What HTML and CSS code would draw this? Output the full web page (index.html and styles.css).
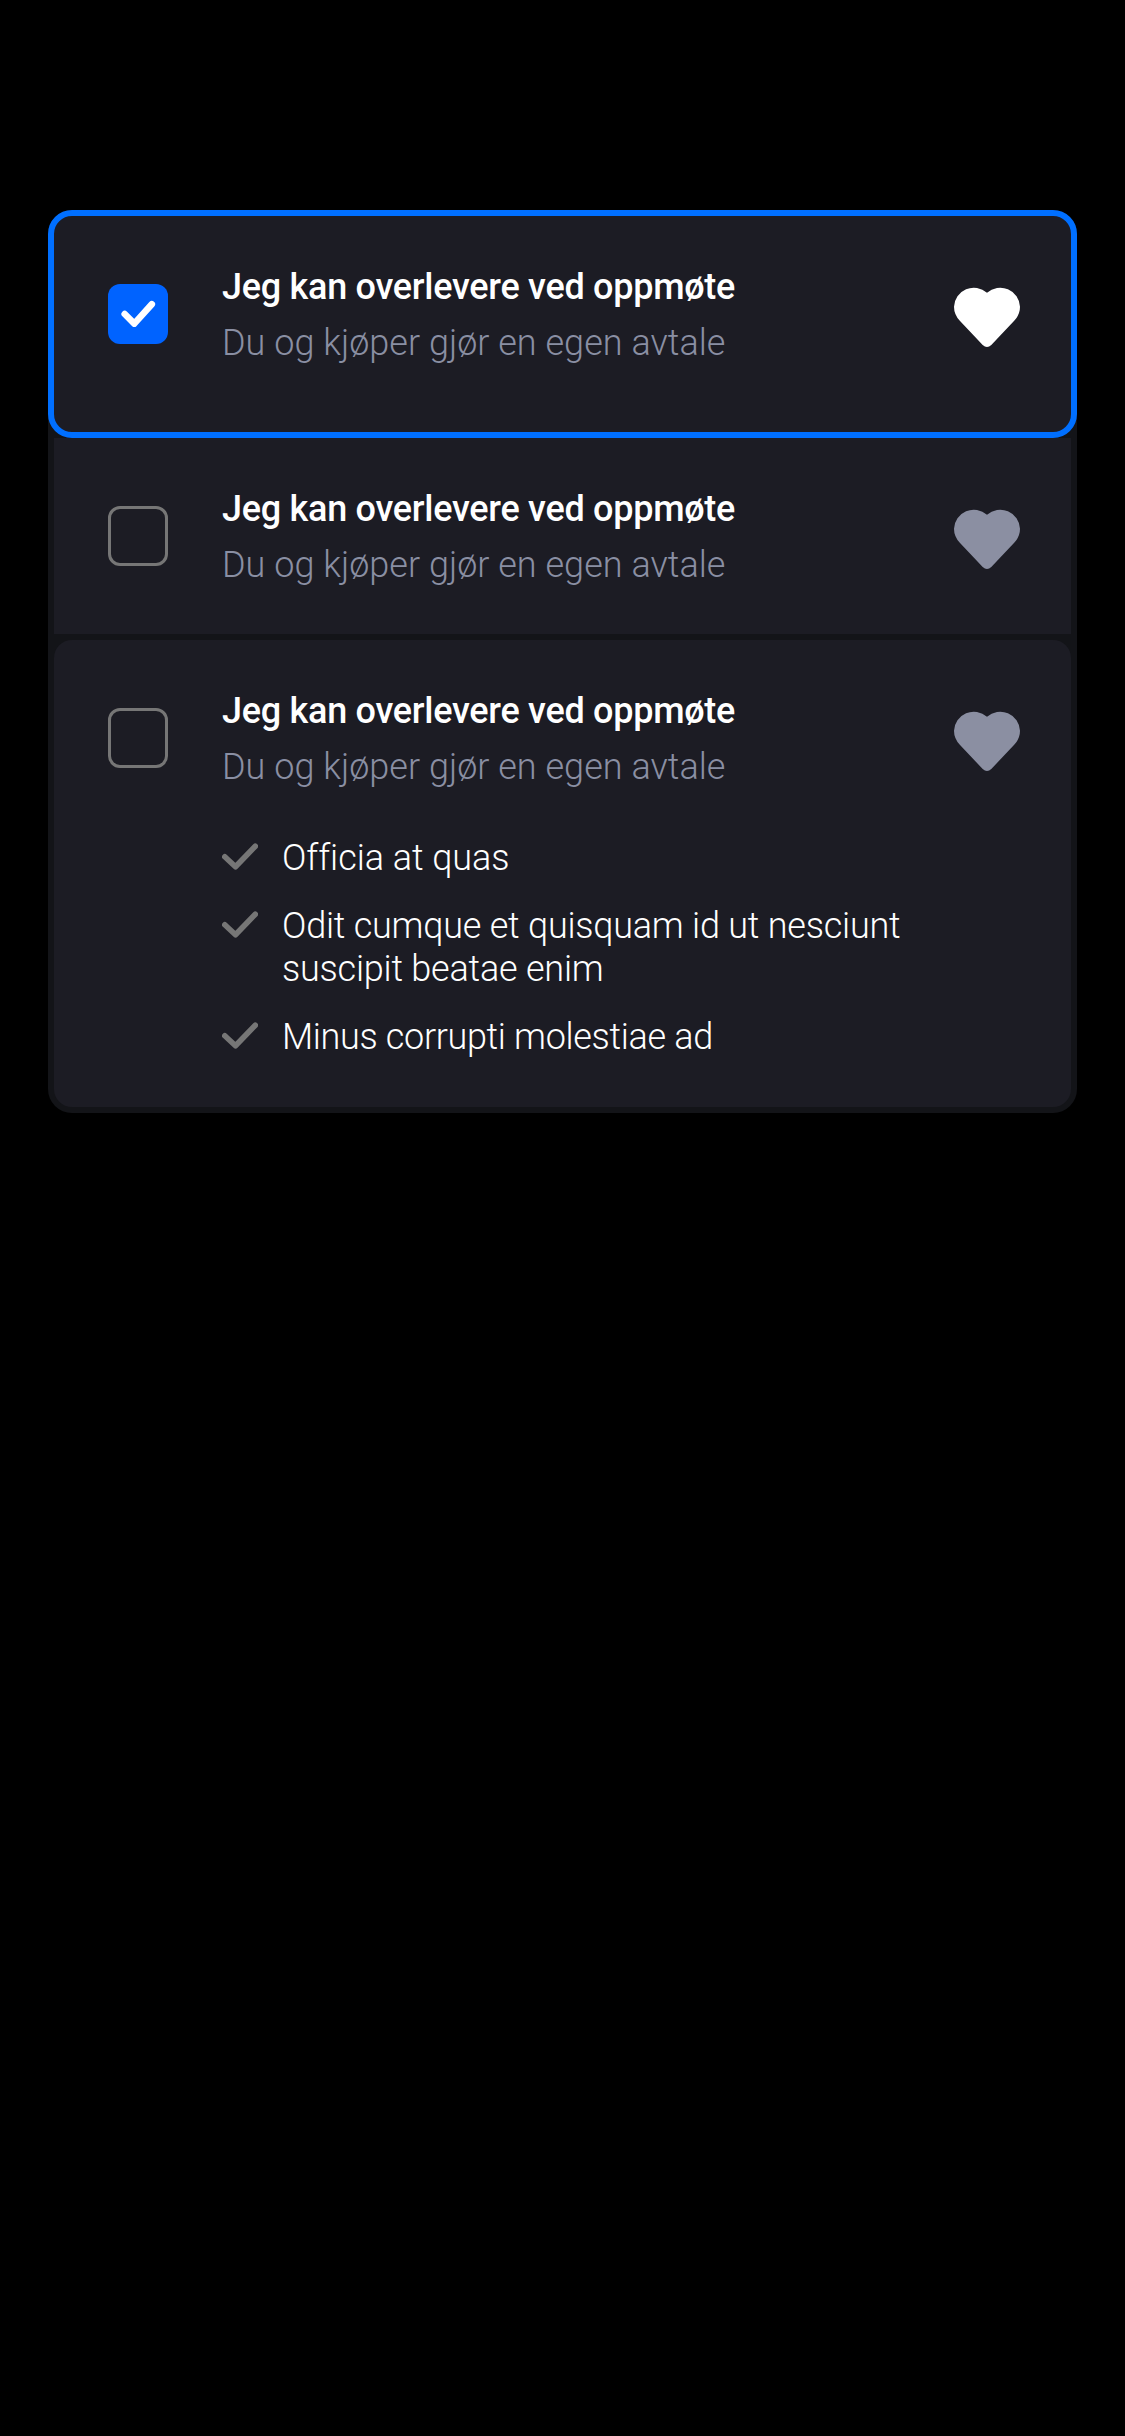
FILE: index.html
```html
<!DOCTYPE html>
<html lang="nb">
<head>
<meta charset="utf-8">
<title>Levering</title>
<link rel="stylesheet" href="styles.css">
</head>
<body>
<svg width="0" height="0" class="defs" aria-hidden="true">
  <symbol id="heart" viewBox="0 0 66 60"><path d="M33 5.8A19.8 19.8 0 0 0 0 19.8Q0 27.6 5.8 33.8L28.7 58Q33 62 37.3 58L60.2 33.8Q66 27.6 66 19.8A19.8 19.8 0 0 0 33 5.8Z" fill="currentColor"/></symbol>
  <symbol id="tick" viewBox="0 0 36 28"><path d="M2.8 13.8 13.5 23.7 33.3 3.2" fill="none" stroke="currentColor" stroke-width="5.6" stroke-linecap="round" stroke-linejoin="round"/></symbol>
</svg>
<main class="options">
  <section class="option option--selected">
    <span class="box box--checked"><svg width="60" height="60" viewBox="0 0 60 60"><path d="M16.7 30 26.3 39.6 43.8 20.2" fill="none" stroke="#fff" stroke-width="6.6" stroke-linecap="round" stroke-linejoin="round"/></svg></span>
    <div class="content">
      <h2 class="title">Jeg kan overlevere ved oppmøte</h2>
      <p class="subtitle">Du og kjøper gjør en egen avtale</p>
    </div>
    <svg class="heart" width="66" height="60"><use href="#heart"/></svg>
  </section>
  <section class="option option--middle">
    <span class="box"></span>
    <div class="content">
      <h2 class="title">Jeg kan overlevere ved oppmøte</h2>
      <p class="subtitle">Du og kjøper gjør en egen avtale</p>
    </div>
    <svg class="heart" width="66" height="60"><use href="#heart"/></svg>
  </section>
  <section class="option option--last">
    <span class="box"></span>
    <div class="content">
      <h2 class="title">Jeg kan overlevere ved oppmøte</h2>
      <p class="subtitle">Du og kjøper gjør en egen avtale</p>
      <ul class="details">
        <li class="detail detail--wide"><svg class="tick" width="36" height="28"><use href="#tick"/></svg><span>Officia at quas</span></li>
        <li class="detail"><svg class="tick" width="36" height="28"><use href="#tick"/></svg><span>Odit cumque et quisquam id ut nesciunt<br>suscipit beatae enim</span></li>
        <li class="detail detail--tight"><svg class="tick" width="36" height="28"><use href="#tick"/></svg><span>Minus corrupti molestiae ad</span></li>
      </ul>
    </div>
    <svg class="heart" width="66" height="60"><use href="#heart"/></svg>
  </section>
</main>
</body>
</html>
```
FILE: styles.css
```css
* { box-sizing: border-box; }
body {
  margin: 0;
  min-height: 2436px;
  padding: 210px 48px 0;
  background: #000;
  color: #fff;
  font-family: Roboto, "Liberation Sans", sans-serif;
  font-size: 36px;
}
h2, p, ul { margin: 0; padding: 0; }
.defs { position: absolute; }
.options {
  display: flex;
  flex-direction: column;
  background: #131418;
  border-radius: 24px;
  padding-bottom: 6px;
}
.option {
  display: flex;
  align-items: flex-start;
  background: #1c1c24;
  margin: 0 6px;
  padding: 0 51px 0 54px;
}
.option--selected {
  height: 228px;
  margin: 0;
  padding-top: 42px;
  border: 6px solid #006fff;
  border-radius: 24px;
}
.option--middle { height: 196px; padding-top: 42px; }
.option--last {
  height: 467px;
  margin-top: 6px;
  padding-top: 42px;
  border-radius: 18px;
}
.box {
  flex: none;
  width: 60px;
  height: 60px;
  margin-top: 26px;
  border: 3px solid #767676;
  border-radius: 12px;
}
.box--checked { border: 0; background: #0063ff; }
.box svg { display: block; }
.content { flex: 1; margin: 1px 0 0 54px; }
.title { font-size: 36px; font-weight: 500; line-height: 56px; letter-spacing: -0.28px; }
.subtitle { color: #8a8fa3; font-weight: 300; line-height: 56px; letter-spacing: 0.03px; }
.heart { flex: none; margin-top: 29px; color: #8b8fa2; }
.option--selected .heart { color: #fff; }
.details {
  display: flex;
  flex-direction: column;
  gap: 25px;
  margin-top: 42px;
  list-style: none;
  font-weight: 300;
  line-height: 43px;
}
.detail { display: flex; gap: 24px; letter-spacing: -0.22px; white-space: nowrap; }
.detail--wide { letter-spacing: -0.05px; }
.detail--tight { letter-spacing: -0.33px; }
.tick { flex: none; margin-top: 6px; color: #767676; }
```
